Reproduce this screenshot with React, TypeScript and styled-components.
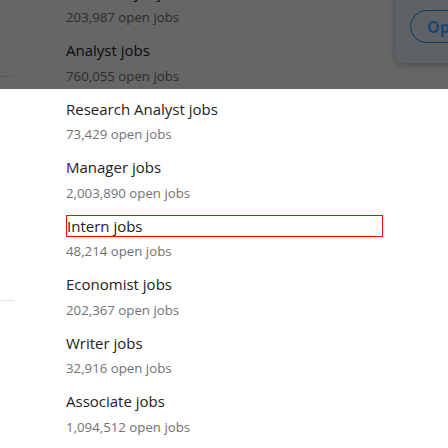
import React from "react";
import styled, { createGlobalStyle } from "styled-components";

const GlobalStyle = createGlobalStyle`
  html, body {
    margin: 0;
    padding: 0;
    background: #fff;
  }
  body {
    font-family: "Open Sans", "Noto Sans", sans-serif;
    width: 448px;
    height: 448px;
    overflow: hidden;
  }
`;

const Page = styled.div`
  position: relative;
  display: flex;
  width: 448px;
  height: 448px;
  overflow: hidden;
`;

const LeftRail = styled.div`
  width: 14px;
  display: flex;
  flex-direction: column;
`;

const RailLine = styled.div<{ $top: number }>`
  margin-top: ${(p) => p.$top}px;
  height: 1px;
  background: #e3e3e3;
`;

const List = styled.ul`
  list-style: none;
  margin: -18.3px 0 0 52px;
  padding: 0;
  display: flex;
  flex-direction: column;
  gap: 12.75px;
`;

const Item = styled.li`
  display: flex;
  flex-direction: column;
  gap: 5.75px;
`;

const Title = styled.a<{ $marked?: boolean }>`
  display: block;
  font-size: 15px;
  line-height: 20px;
  font-weight: 500;
  color: #222;
  text-decoration: none;
  ${(p) =>
    p.$marked &&
    `
    width: 315px;
    border: 1px solid #ff0000;
    margin: -1px 0;
  `}
`;

const Count = styled.span`
  font-size: 13.25px;
  line-height: 20px;
  font-weight: 400;
  color: #727272;
`;

const Overlay = styled.div`
  position: absolute;
  left: 0;
  top: 0;
  width: 448px;
  height: 89px;
  background: rgba(0, 0, 0, 0.6);
`;

const Card = styled.div`
  position: absolute;
  left: 395px;
  top: -20px;
  width: 120px;
  height: 83px;
  border-radius: 8px;
  background: #5e6266;
  box-shadow: 0 2px 6px rgba(0, 0, 0, 0.25);
  display: flex;
  align-items: flex-end;
  padding: 0 0 20px 15px;
  box-sizing: border-box;
`;

const OpenButton = styled.button`
  height: 33px;
  padding: 0 16px;
  border: 1px solid #0e3a64;
  border-radius: 17px;
  background: transparent;
  color: #1c4571;
  font-family: "Open Sans", "Noto Sans", sans-serif;
  font-size: 16px;
  font-weight: 700;
  white-space: nowrap;
`;

const jobs = [
  { title: "Data Analyst jobs", count: "203,987" },
  { title: "Analyst jobs", count: "760,055" },
  { title: "Research Analyst jobs", count: "73,429" },
  { title: "Manager jobs", count: "2,003,890" },
  { title: "Intern jobs", count: "48,214", marked: true },
  { title: "Economist jobs", count: "202,367" },
  { title: "Writer jobs", count: "32,916" },
  { title: "Associate jobs", count: "1,094,512" },
];

export default function App() {
  return (
    <Page>
      <GlobalStyle />
      <LeftRail>
        <RailLine $top={76} />
        <RailLine $top={223} />
      </LeftRail>
      <List>
        {jobs.map((j) => (
          <Item key={j.title}>
            <Title href="#" $marked={j.marked}>
              {j.title}
            </Title>
            <Count>{j.count} open jobs</Count>
          </Item>
        ))}
      </List>
      <Overlay>
        <Card>
          <OpenButton>Open</OpenButton>
        </Card>
      </Overlay>
    </Page>
  );
}
